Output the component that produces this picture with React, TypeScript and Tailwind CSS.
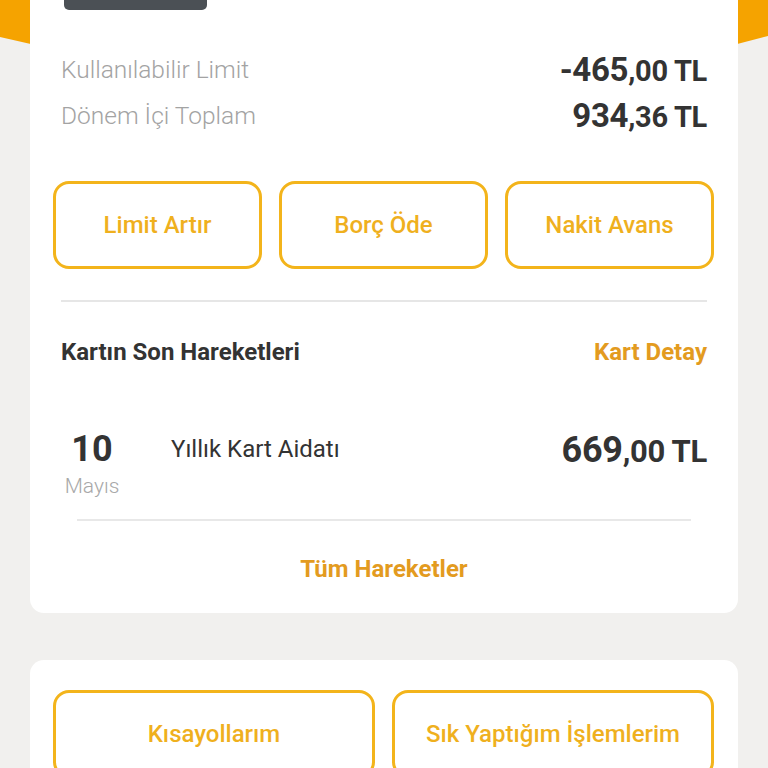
import React from 'react';

function Amount({ whole, cents, big = false }: { whole: string; cents: string; big?: boolean }) {
  return (
    <span className="font-bold text-[#333333] tracking-[-0.3px]">
      <span className={big ? 'text-[36px]' : 'text-[33px]'}>{whole}</span>
      <span className={big ? 'text-[31px]' : 'text-[29px]'}>,{cents} TL</span>
    </span>
  );
}

function OutlineButton({ label }: { label: string }) {
  return (
    <button className="h-[88px] rounded-[16px] border-[3px] border-[#f3b41b] bg-white text-[24px] font-medium text-[#efb01e]">
      {label}
    </button>
  );
}

export default function App() {
  return (
    <div
      className="relative h-[768px] overflow-hidden bg-[#f1f0ee]"
      style={{ fontFamily: 'Roboto, "Noto Sans", sans-serif' }}
    >
      {/* orange header behind the card */}
      <div className="absolute inset-x-0 top-0 h-[46px] bg-[#f5a300] [clip-path:polygon(0_0,100%_0,100%_36px,96%_44px,4%_44px,0_37px)]" />

      <div className="relative mx-[30px] rounded-b-[14px] bg-white">
        <div className="ml-[34px] h-[10px] w-[143px] rounded-b-[5px] bg-[#4b5055]" />

        <div className="mt-[37px] px-[31px]">
          <div className="flex h-[46px] items-center justify-between">
            <span className="text-[24.5px] font-light text-[#a3a3a3]">Kullanılabilir Limit</span>
            <Amount whole="-465" cents="00" />
          </div>
          <div className="flex h-[46px] items-center justify-between">
            <span className="text-[24.5px] font-light text-[#a3a3a3]">Dönem İçi Toplam</span>
            <Amount whole="934" cents="36" />
          </div>
        </div>

        <div className="mt-[42px] grid grid-cols-3 gap-[17px] pl-[23px] pr-[24px]">
          <OutlineButton label="Limit Artır" />
          <OutlineButton label="Borç Öde" />
          <OutlineButton label="Nakit Avans" />
        </div>

        <div className="mx-[31px] mt-[31px] h-[2px] bg-[#e6e6e6]" />

        <div className="mt-[30px] flex h-[40px] items-center justify-between px-[31px]">
          <span className="text-[24px] font-bold text-[#333333]">Kartın Son Hareketleri</span>
          <span className="text-[24px] font-bold text-[#e39b1f]">Kart Detay</span>
        </div>

        <div className="mt-[57px] flex items-start justify-between px-[31px]">
          <div className="flex items-start">
            <div className="flex w-[62px] flex-col items-center">
              <span className="h-[40px] text-[36px] font-bold leading-[40px] text-[#333333]">10</span>
              <span className="mt-[4px] text-[21px] font-light leading-[26px] text-[#a8a8a8]">Mayıs</span>
            </div>
            <span className="ml-[48px] text-[24px] leading-[40px] text-[#333333]">Yıllık Kart Aidatı</span>
          </div>
          <span className="leading-[42px]">
            <Amount whole="669" cents="00" big />
          </span>
        </div>

        <div className="mx-[47px] mt-[20px] h-[2px] bg-[#e8e8e8]" />

        <div className="flex h-[92px] items-center justify-center pt-[4px]">
          <span className="text-[24px] font-bold text-[#e39b1f]">Tüm Hareketler</span>
        </div>
      </div>

      <div className="mx-[30px] mt-[47px] rounded-[14px] bg-white pt-[30px] pb-[30px]">
        <div className="grid grid-cols-2 gap-[17px] pl-[23px] pr-[24px]">
          <OutlineButton label="Kısayollarım" />
          <OutlineButton label="Sık Yaptığım İşlemlerim" />
        </div>
      </div>
    </div>
  );
}
